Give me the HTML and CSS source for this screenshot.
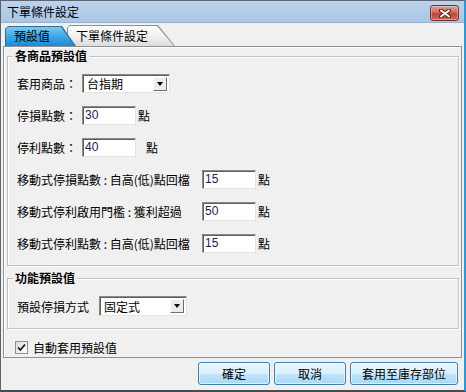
FILE: index.html
```html
<!DOCTYPE html>
<html lang="zh-Hant">
  <head>
    <meta charset="UTF-8" />
    <title>下單條件設定</title>
    <link rel="stylesheet" href="styles.css">
  </head>
  <body>
    <div class="window">
      <div class="titlebar">
        <span class="title">下單條件設定</span>
        <button class="close-btn">
          <svg width="12" height="9" viewBox="0 0 12 9">
            <path d="M2 1.5 L10 7.5 M10 1.5 L2 7.5" stroke="#5a1d16" stroke-width="4" stroke-linecap="round" fill="none"/>
            <path d="M2 1.5 L10 7.5 M10 1.5 L2 7.5" stroke="#ffffff" stroke-width="2" stroke-linecap="round" fill="none"/>
          </svg>
        </button>
      </div>

      <div class="tabs">
        <div class="tab tab-active"><span>預設值</span></div>
        <div class="tab tab-other"><span>下單條件設定</span></div>
      </div>

      <div class="panel">
        <fieldset class="group group-product">
          <legend>各商品預設值</legend>
          <div class="row">
            <span class="label label-short">套用商品：</span>
            <div class="combo"><span>台指期</span><span class="combo-arrow"></span></div>
          </div>
          <div class="row">
            <span class="label label-short">停損點數：</span>
            <div class="field">30</div>
            <span class="unit">點</span>
          </div>
          <div class="row">
            <span class="label label-short">停利點數：</span>
            <div class="field">40</div>
            <span class="unit unit-wide">點</span>
          </div>
          <div class="row">
            <span class="label label-long">移動式停損點數 : 自高(低)點回檔</span>
            <div class="field">15</div>
            <span class="unit">點</span>
          </div>
          <div class="row">
            <span class="label label-long">移動式停利啟用門檻 : 獲利超過</span>
            <div class="field">50</div>
            <span class="unit">點</span>
          </div>
          <div class="row">
            <span class="label label-long">移動式停利點數 : 自高(低)點回檔</span>
            <div class="field">15</div>
            <span class="unit">點</span>
          </div>
        </fieldset>

        <fieldset class="group group-func">
          <legend>功能預設值</legend>
          <div class="row row-tall">
            <span class="label label-mid">預設停損方式</span>
            <div class="combo combo-tall"><span>固定式</span><span class="combo-arrow"></span></div>
          </div>
        </fieldset>

        <div class="check-row">
          <span class="checkbox">
            <svg width="9" height="9" viewBox="0 0 9 9">
              <path d="M1 4.5 L3.3 7 L8 1.5" stroke="#1a1a1a" stroke-width="1.8" fill="none"/>
            </svg>
          </span>
          <span>自動套用預設值</span>
        </div>
      </div>

      <div class="buttons">
        <button class="btn btn-small">確定</button>
        <button class="btn btn-small">取消</button>
        <button class="btn btn-wide">套用至庫存部位</button>
      </div>
    </div>
  </body>
</html>
```

FILE: styles.css
```css
* {
  box-sizing: border-box;
}

body {
  margin: 0;
  background: #ffffff;
  font-family: "Noto Sans CJK TC", "Noto Sans", sans-serif;
  font-size: 12px;
  color: #000000;
}

.window {
  width: 466px;
  height: 392px;
  background: #f0f0f0;
  border: 1px solid #5d6670;
  border-right: 2px solid #2a9ad8;
  border-bottom: 2px solid #3a4d58;
  display: flex;
  flex-direction: column;
}

.titlebar {
  height: 22px;
  flex-shrink: 0;
  display: flex;
  justify-content: space-between;
  align-items: flex-start;
  padding: 0 5px 0 6px;
  background: linear-gradient(#bcd4ec, #a9c6e4);
  border-bottom: 1px solid #97b3d2;
}

.title {
  line-height: 22px;
}

.close-btn {
  margin-top: 4px;
  width: 29px;
  height: 16px;
  padding: 0;
  border: 1px solid #7b2e25;
  border-radius: 3px;
  background: linear-gradient(#e2a299, #d0685c 45%, #c04434 55%, #cd6a58);
  box-shadow: inset 0 0 0 1px rgba(255, 255, 255, 0.35);
  display: flex;
  align-items: center;
  justify-content: center;
}

/* tab strip */
.tabs {
  height: 23px;
  flex-shrink: 0;
  display: flex;
  align-items: flex-end;
  padding-left: 4px;
}

.tab {
  position: relative;
  height: 20px;
}

.tab::before {
  content: "";
  position: absolute;
  top: 1px;
  left: 1px;
  right: 1px;
  bottom: 0;
}

.tab span {
  position: relative;
  display: block;
  line-height: 20px;
  padding-left: 9px;
}

.tab-active {
  width: 71px;
  z-index: 2;
  background: #2c6e9c;
  clip-path: polygon(0 100%, 0 3px, 3px 0, calc(100% - 14px) 0, 100% 100%);
}

.tab-active::before {
  background: linear-gradient(#7cc8f2, #3ea6e6 50%, #1a8bd8);
  clip-path: polygon(0 100%, 0 2px, 2px 0, calc(100% - 14px) 0, 100% 100%);
}

.tab-other {
  width: 108px;
  height: 21px;
  margin-left: -9px;
  z-index: 1;
  background: #8d9094;
  clip-path: polygon(0 100%, 0 3px, 3px 0, calc(100% - 17px) 0, 100% 100%);
}

.tab-other::before {
  background: linear-gradient(#ffffff, #f2f2f2 45%, #dcdcdc);
  clip-path: polygon(0 100%, 0 2px, 2px 0, calc(100% - 17px) 0, 100% 100%);
}

.tab-other span {
  line-height: 21px;
}

/* panel */
.panel {
  height: 312px;
  flex-shrink: 0;
  margin: 0 2px;
  padding: 2px 2px 0 3px;
  border: 1px solid #8e9297;
  box-shadow: inset 1px 1px 0 #ffffff;
}

.group {
  margin: 0;
  padding: 11px 8px 12px 9px;
  border: 1px solid #c2c2c2;
  box-shadow: 1px 1px 0 #ffffff, inset 1px 1px 0 #ffffff;
}

.group legend {
  padding: 0 2px;
  margin-left: -4px;
  line-height: 14px;
  font-weight: bold;
  background: #f0f0f0;
}

.group-func {
  margin-top: 5px;
}

.row {
  display: flex;
  align-items: center;
  height: 19px;
}

.row + .row {
  margin-top: 13px;
}

.row-tall {
  height: 20px;
}

.label {
  flex-shrink: 0;
  white-space: nowrap;
}

.label-short {
  width: 65px;
}

.label-mid {
  width: 82px;
}

.label-long {
  width: 185px;
}

.field {
  width: 54px;
  height: 19px;
  background: #ffffff;
  border: 1px solid;
  border-color: #8a8a8a #e3e3e3 #e3e3e3 #8a8a8a;
  box-shadow: inset 1px 1px 0 #5f5f5f;
  padding-left: 2px;
  font-family: "Liberation Sans", Arial, sans-serif;
  font-size: 12px;
  line-height: 17px;
  color: #1c1c58;
}

.unit {
  margin-left: 2px;
}

.unit-wide {
  margin-left: 10px;
}

.combo {
  width: 88px;
  height: 19px;
  display: flex;
  align-items: center;
  justify-content: space-between;
  background: #ffffff;
  border: 1px solid;
  border-color: #8a8a8a #e3e3e3 #e3e3e3 #8a8a8a;
  box-shadow: inset 1px 1px 0 #5f5f5f;
  padding: 0 2px 0 4px;
}

.combo-tall {
  height: 20px;
}

.combo-arrow {
  position: relative;
  width: 14px;
  height: 14px;
  background: #ececec;
  border: 1px solid;
  border-color: #ffffff #6d6d6d #6d6d6d #ffffff;
}

.combo-arrow::after {
  content: "";
  position: absolute;
  left: 3px;
  top: 4px;
  border-left: 3.5px solid transparent;
  border-right: 3.5px solid transparent;
  border-top: 4px solid #000000;
}

.check-row {
  display: flex;
  align-items: center;
  gap: 5px;
  height: 13px;
  margin: 12px 0 0 8px;
}

.checkbox {
  width: 13px;
  height: 13px;
  display: flex;
  align-items: center;
  justify-content: center;
  border: 1px solid #8e8f8f;
  background: linear-gradient(135deg, #dcdcdc, #ffffff);
}

.buttons {
  display: flex;
  justify-content: flex-end;
  gap: 4px;
  margin-top: 4px;
  padding-right: 6px;
}

.btn {
  height: 23px;
  padding: 0;
  border: 1px solid #3c7fb1;
  border-radius: 3px;
  background: linear-gradient(#eaf6fd, #d9f0fc 50%, #bee6fd 51%, #a7d9f5);
  box-shadow: inset 0 0 0 1px rgba(255, 255, 255, 0.6);
  font-family: "Noto Sans CJK TC", "Noto Sans", sans-serif;
  font-size: 12px;
  color: #000000;
}

.btn-small {
  width: 72px;
}

.btn-wide {
  width: 108px;
}
```
